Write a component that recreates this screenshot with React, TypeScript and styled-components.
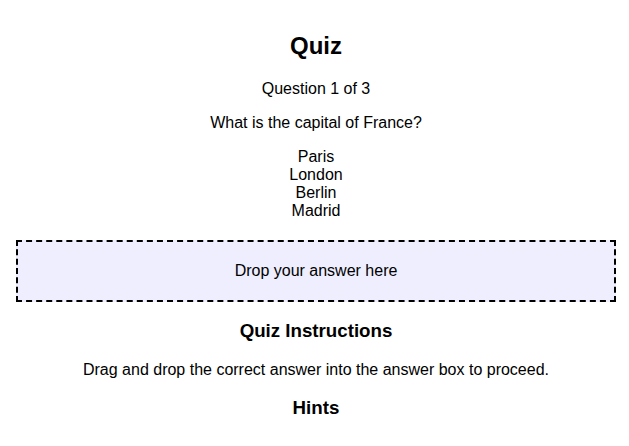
import React from "react";
import styled, { createGlobalStyle } from "styled-components";

const GlobalStyle = createGlobalStyle`
  html, body {
    margin: 0;
    padding: 0;
    background: #ffffff;
  }
  body {
    font-family: "Liberation Sans", Arial, sans-serif;
    color: #000000;
  }
`;

const Page = styled.div`
  width: 600px;
  margin: 0 0 0 16px;
  padding-top: 32px;
  text-align: center;
`;

const Title = styled.h2`
  font-size: 24px;
  font-weight: bold;
  margin: 0 0 19.92px;
`;

const Text = styled.p`
  font-size: 16px;
  margin: 16px 0;
`;

const Options = styled.div`
  margin: 16px 0 20px;
  font-size: 16px;
`;

const Option = styled.div`
  cursor: grab;
`;

const DropZone = styled.div`
  border: 2px dashed #000000;
  background: #eeeeff;
  padding: 20px;
  font-size: 16px;
  margin: 0 0 18px;
`;

const Heading = styled.h3`
  font-size: 18.72px;
  font-weight: bold;
  margin: 18px 0 19px;
`;

const options = ["Paris", "London", "Berlin", "Madrid"];

export default function App() {
  return (
    <>
      <GlobalStyle />
      <Page>
        <Title>Quiz</Title>
        <Text>Question 1 of 3</Text>
        <Text>What is the capital of France?</Text>
        <Options>
          {options.map((o) => (
            <Option key={o} draggable>
              {o}
            </Option>
          ))}
        </Options>
        <DropZone>Drop your answer here</DropZone>
        <Heading>Quiz Instructions</Heading>
        <Text>Drag and drop the correct answer into the answer box to proceed.</Text>
        <Heading>Hints</Heading>
      </Page>
    </>
  );
}
